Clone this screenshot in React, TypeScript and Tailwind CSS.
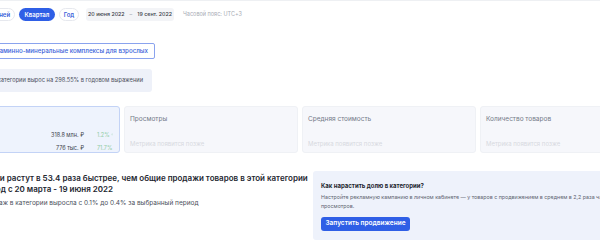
import { ArrowUp } from "lucide-react";

const periods = ["7 дней", "30 дней", "Квартал", "Год"];

const cards = [
  { title: "Просмотры" },
  { title: "Средняя стоимость" },
  { title: "Количество товаров" },
];

function Chip({ label, active, w }: { label: string; active?: boolean; w: string }) {
  return (
    <span
      className={
        "flex h-[13px] items-center justify-center rounded-full text-[6px] font-semibold " +
        w +
        (active ? " bg-[#2f5fe6] text-white" : " border border-[#e6e8ee] bg-white text-[#3a5fd9]")
      }
    >
      {label}
    </span>
  );
}

export default function App() {
  return (
    <div className="relative h-[245px] w-[600px] overflow-hidden bg-white font-['Inter',sans-serif] text-[#1f2430]">
      <div className="h-[1px] bg-[#eef0f3]" />
      <div className="ml-[-54px] w-[740px]">
        {/* period switch */}
        <div className="mt-[7px] flex items-center">
          <div className="flex items-center gap-[4px]">
            <Chip label={periods[0]} w="w-[31px]" />
            <Chip label={periods[1]} w="w-[34px]" />
            <Chip label={periods[2]} w="w-[36px]" active />
            <Chip label={periods[3]} w="w-[20px]" />
          </div>
          <div className="ml-[7px] flex h-[13px] w-[88px] items-center justify-center gap-[5px] rounded-[3px] bg-[#f3f4f7] text-[5.3px] font-medium text-[#3b3f4a]">
            <span>20 июня 2022</span>
            <span className="text-[#a0a4ad]">–</span>
            <span>19 сент. 2022</span>
          </div>
          <span className="ml-[9px] text-[5.5px] text-[#a7abb4]">Часовой пояс: UTC+3</span>
        </div>

        {/* category */}
        <div className="ml-[36px] mt-[22px] flex h-[16px] w-[173px] items-center justify-end whitespace-nowrap rounded-[2px] border border-[#8aa3ee] pr-[6px] text-[6.2px] font-medium text-[#3a5fd9]">
          Витаминно-минеральные комплексы для взрослых
        </div>

        <div className="ml-[36px] mt-[10px] flex h-[23px] w-[170px] items-center justify-end whitespace-nowrap rounded-[3px] bg-[#eef1f9] pr-[9px] text-[5.7px] text-[#4b505c]">
          Объем продаж категории вырос на 298.55% в годовом выражении
        </div>

        {/* metric cards */}
        <div className="mt-[14px] flex gap-[4px]">
          <div className="flex h-[47px] w-[174px] flex-col rounded-[3px] border border-[#c3d3f6] bg-[#eef3fd] px-[6px] pt-[7px]">
            <span className="text-[6.5px] text-[#6b7080]">Выручка</span>
            <div className="mt-[7px] flex items-center justify-end text-[5.5px] text-[#3b3f4a]">
              <span>318.8 млн. ₽</span>
              <span className="ml-[13px] flex w-[16px] items-center gap-[1px] text-[#8fcca4]">
                1.2% <ArrowUp size={5} strokeWidth={2} />
              </span>
            </div>
            <div className="mt-[5px] flex items-center justify-end text-[5.5px] text-[#3b3f4a]">
              <span>776 тыс. ₽</span>
              <span className="ml-[13px] flex w-[16px] items-center gap-[1px] text-[#8fcca4]">
                71.7% <ArrowUp size={5} strokeWidth={2} />
              </span>
            </div>
          </div>
          {cards.map((c) => (
            <div
              key={c.title}
              className="flex h-[47px] w-[174px] flex-col rounded-[3px] border border-[#eff1f5] bg-[#f6f7fb] px-[5px] pt-[8px]"
            >
              <span className="text-[6.5px] text-[#747a88]">{c.title}</span>
              <span className="mt-[14px] text-[6px] text-[#d6d9e0]">Метрика появится позже</span>
            </div>
          ))}
        </div>

        {/* bottom */}
        <div className="mt-[18px] flex">
          <div className="ml-[-1px] w-[368px] shrink-0 pt-[2px]">
            <div className="whitespace-nowrap text-[8px] font-semibold leading-[11px] text-[#23262f]">
              Ваши продажи растут в 53.4 раза быстрее, чем общие продажи товаров в этой категории
              <br />
              за весь период с 20 марта - 19 июня 2022
            </div>
            <div className="ml-[-2px] mt-[4px] whitespace-nowrap text-[6.5px] text-[#4b505c]">
              Доля ваших продаж в категории выросла с 0.1% до 0.4% за выбранный период
            </div>
          </div>
          <div className="w-[400px] shrink-0 rounded-[3px] bg-[#eef2fb] px-[8px] pb-[9px] pt-[10px]">
            <div className="text-[6px] font-bold text-[#23262f]">Как нарастить долю в категории?</div>
            <div className="mt-[3px] whitespace-nowrap text-[5.3px] leading-[9px] text-[#5d6370]">
              Настройте рекламную кампанию в личном кабинете — у товаров с продвижением в среднем в 2,2 раза чаще больше
              <br />
              просмотров.
            </div>
            <button className="mt-[6px] flex h-[14px] w-[89px] items-center justify-center rounded-[3px] bg-[#2f5fe6] text-[6.5px] font-semibold text-white">
              Запустить продвижение
            </button>
          </div>
        </div>
      </div>
    </div>
  );
}
